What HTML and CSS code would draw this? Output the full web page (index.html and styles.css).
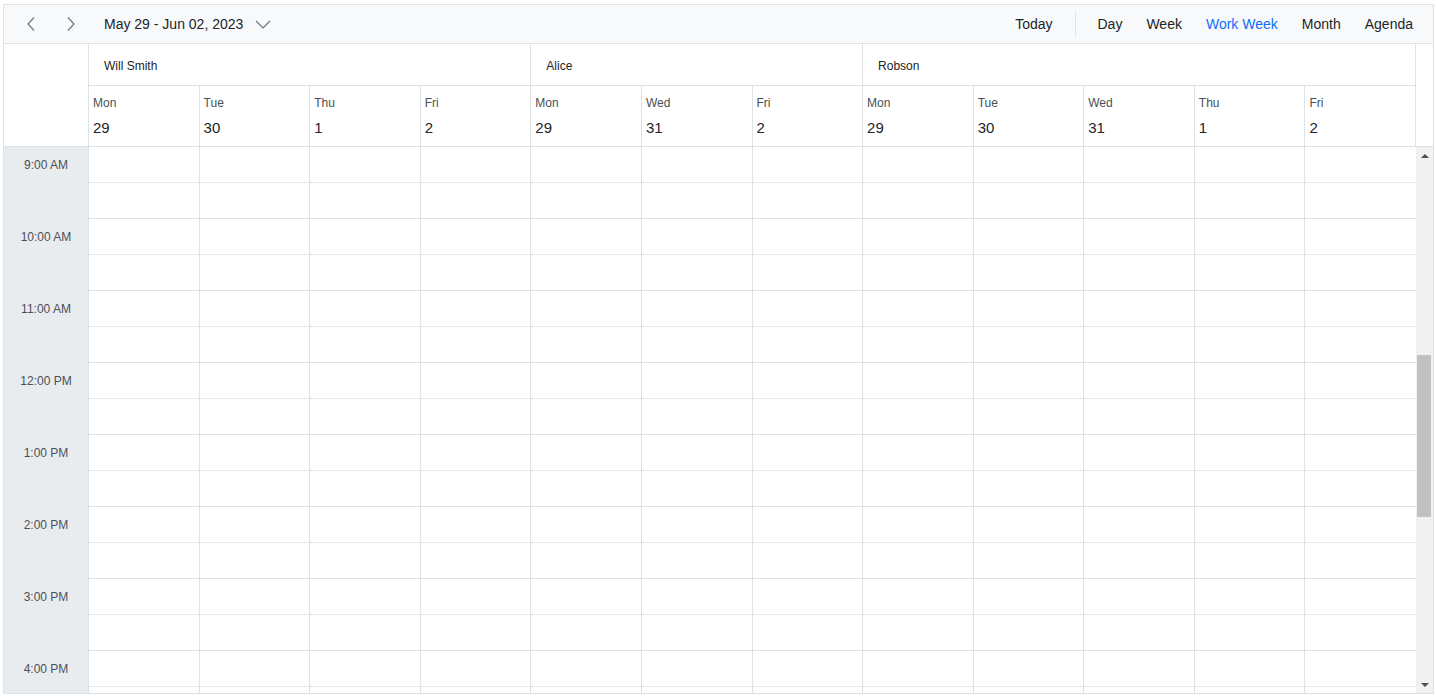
FILE: index.html
```html
<!DOCTYPE html>
<html>
<head>
    <meta charset="utf-8">
    <title>Scheduler - Work Week</title>
    <link rel="stylesheet" href="styles.css">
</head>
<body>

<div class="schedule">

    <div class="toolbar">
        <button class="navBtn" title="Previous">
            <svg width="8" height="14" viewBox="0 0 8 14"><polyline points="7,0.5 1,7 7,13.5" fill="none" stroke="#6c757d" stroke-width="1.2"/></svg>
        </button>
        <button class="navBtn" title="Next">
            <svg width="8" height="14" viewBox="0 0 8 14"><polyline points="1,0.5 7,7 1,13.5" fill="none" stroke="#6c757d" stroke-width="1.2"/></svg>
        </button>
        <div class="dateRange">
            May 29 - Jun 02, 2023
            <svg class="caret" width="16" height="9" viewBox="0 0 16 9"><polyline points="1,1 8,8 15,1" fill="none" stroke="#6c757d" stroke-width="1.2"/></svg>
        </div>

        <div class="toolbarRight">
            <span class="tbItem">Today</span>
            <span class="tbSep"></span>
            <span class="tbItem">Day</span>
            <span class="tbItem">Week</span>
            <span class="tbItem active">Work Week</span>
            <span class="tbItem">Month</span>
            <span class="tbItem">Agenda</span>
        </div>
    </div>

    <div class="headGrid">
        <div class="corner"></div>
        <div class="resCell span4">Will Smith</div>
        <div class="resCell span3">Alice</div>
        <div class="resCell span5">Robson</div>

        <div class="dateCell"><div class="dayName">Mon</div><div class="dayNum">29</div></div>
        <div class="dateCell"><div class="dayName">Tue</div><div class="dayNum">30</div></div>
        <div class="dateCell"><div class="dayName">Thu</div><div class="dayNum">1</div></div>
        <div class="dateCell"><div class="dayName">Fri</div><div class="dayNum">2</div></div>

        <div class="dateCell"><div class="dayName">Mon</div><div class="dayNum">29</div></div>
        <div class="dateCell"><div class="dayName">Wed</div><div class="dayNum">31</div></div>
        <div class="dateCell"><div class="dayName">Fri</div><div class="dayNum">2</div></div>

        <div class="dateCell"><div class="dayName">Mon</div><div class="dayNum">29</div></div>
        <div class="dateCell"><div class="dayName">Tue</div><div class="dayNum">30</div></div>
        <div class="dateCell"><div class="dayName">Wed</div><div class="dayNum">31</div></div>
        <div class="dateCell"><div class="dayName">Thu</div><div class="dayNum">1</div></div>
        <div class="dateCell"><div class="dayName">Fri</div><div class="dayNum">2</div></div>
    </div>

    <div class="contentWrap">
        <div class="timeCol" id="timeCol"></div>
        <div class="dayGrid" id="dayGrid"></div>
        <div class="vScroll">
            <div class="sbBtn"><span class="arrowUp"></span></div>
            <div class="sbTrack"><div class="sbThumb"></div></div>
            <div class="sbBtn"><span class="arrowDown"></span></div>
        </div>
    </div>

</div>

<script src="script.js"></script>
</body>
</html>
```

FILE: styles.css
```css
body {
    margin: 4px 2px 0 3px;
    font-family: "Liberation Sans", Arial, sans-serif;
    color: #212529;
    background: #fff;
}

.schedule {
    box-sizing: border-box;
    height: 690px;
    border: 1px solid #dee2e6;
    display: flex;
    flex-direction: column;
}

/* toolbar */

.toolbar {
    box-sizing: border-box;
    height: 39px;
    flex: none;
    display: flex;
    align-items: center;
    padding: 0 8px 0 7px;
    background-color: #f8f9fa;
    border-bottom: 1px solid #dee2e6;
}

.navBtn {
    width: 40px;
    height: 38px;
    border: none;
    background: transparent;
    padding: 0;
    display: flex;
    align-items: center;
    justify-content: center;
}

.dateRange {
    margin-left: 13px;
    font-size: 14px;
    display: flex;
    align-items: center;
}

.caret {
    margin-left: 12px;
    margin-top: 1px;
}

.toolbarRight {
    margin-left: auto;
    display: flex;
    align-items: center;
}

.tbItem {
    font-size: 14px;
    padding: 0 12px;
    line-height: 38px;
}

.tbItem.active {
    color: #0d6efd;
}

.tbSep {
    width: 1px;
    height: 24px;
    background: #dee2e6;
    margin: 0 10px;
}

/* header */

.headGrid {
    flex: none;
    display: grid;
    grid-template-columns: 85px repeat(12, 1fr);
    grid-template-rows: 42px 60px;
    padding-right: 17px;
    border-bottom: 1px solid #dee2e6;
    box-sizing: border-box;
    height: 103px;
}

.corner {
    grid-row: 1 / span 2;
    border-right: 1px solid #dee2e6;
}

.resCell {
    border-right: 1px solid #dee2e6;
    border-bottom: 1px solid #dee2e6;
    font-size: 12px;
    padding: 3px 0 0 15px;
    display: flex;
    align-items: center;
}

.span4 {
    grid-column: span 4;
}

.span3 {
    grid-column: span 3;
}

.span5 {
    grid-column: span 5;
}

.dateCell {
    border-right: 1px solid #dee2e6;
    padding: 10px 0 0 4px;
}

.dayName {
    font-size: 12px;
    line-height: 15px;
    color: #495057;
}

.dayNum {
    font-size: 15px;
    line-height: 20px;
    margin-top: 7px;
}

/* content */

.contentWrap {
    flex: 1;
    display: flex;
    overflow: hidden;
}

.timeCol {
    flex: none;
    width: 85px;
    box-sizing: border-box;
    background-color: #e9ecef;
    border-right: 1px solid #dee2e6;
}

.timeHour {
    height: 72px;
}

.timeLabel {
    height: 36px;
    line-height: 36px;
    text-align: center;
    font-size: 12px;
    color: #495057;
}

.dayGrid {
    flex: 1;
    display: grid;
    grid-template-columns: repeat(12, 1fr);
    align-self: flex-start;
}

.dayCol {
    border-right: 1px solid #dee2e6;
}

.dayCol:last-child {
    border-right: none;
}

.slot {
    box-sizing: border-box;
    height: 36px;
    border-bottom: 1px dotted #d6d9dd;
}

.slot.hourEnd {
    border-bottom: 1px solid #dee2e6;
}

/* scrollbar of the content area */

.vScroll {
    flex: none;
    width: 17px;
    background: #f1f1f1;
    display: flex;
    flex-direction: column;
}

.sbBtn {
    height: 17px;
    display: flex;
    align-items: center;
    justify-content: center;
}

.arrowUp,
.arrowDown {
    width: 0;
    height: 0;
    border-left: 4px solid transparent;
    border-right: 4px solid transparent;
}

.arrowUp {
    border-bottom: 4px solid #505050;
}

.arrowDown {
    border-top: 4px solid #505050;
}

.sbTrack {
    flex: 1;
}

.sbThumb {
    height: 162px;
    margin: 191px 2px 0 1px;
    background: #c1c1c1;
}
```

FILE: script.js
```js
var timeCol = document.getElementById('timeCol');
var dayGrid = document.getElementById('dayGrid');

// visible part of the day
var startHour = 9;
var endHour = 17;

function hourText(h) {
    var suffix = h < 12 ? 'AM' : 'PM';
    var hh = h % 12;
    if (hh == 0) hh = 12;
    return hh + ':00 ' + suffix;
}

for (var h = startHour; h < endHour; h++) {
    var hour = document.createElement('div');
    hour.className = 'timeHour';
    var label = document.createElement('div');
    label.className = 'timeLabel';
    label.textContent = hourText(h);
    hour.appendChild(label);
    timeCol.appendChild(hour);
}

for (var c = 0; c < 12; c++) {
    var col = document.createElement('div');
    col.className = 'dayCol';
    for (var s = 0; s < (endHour - startHour) * 2; s++) {
        var slot = document.createElement('div');
        slot.className = s % 2 ? 'slot hourEnd' : 'slot';
        col.appendChild(slot);
    }
    dayGrid.appendChild(col);
}
```
